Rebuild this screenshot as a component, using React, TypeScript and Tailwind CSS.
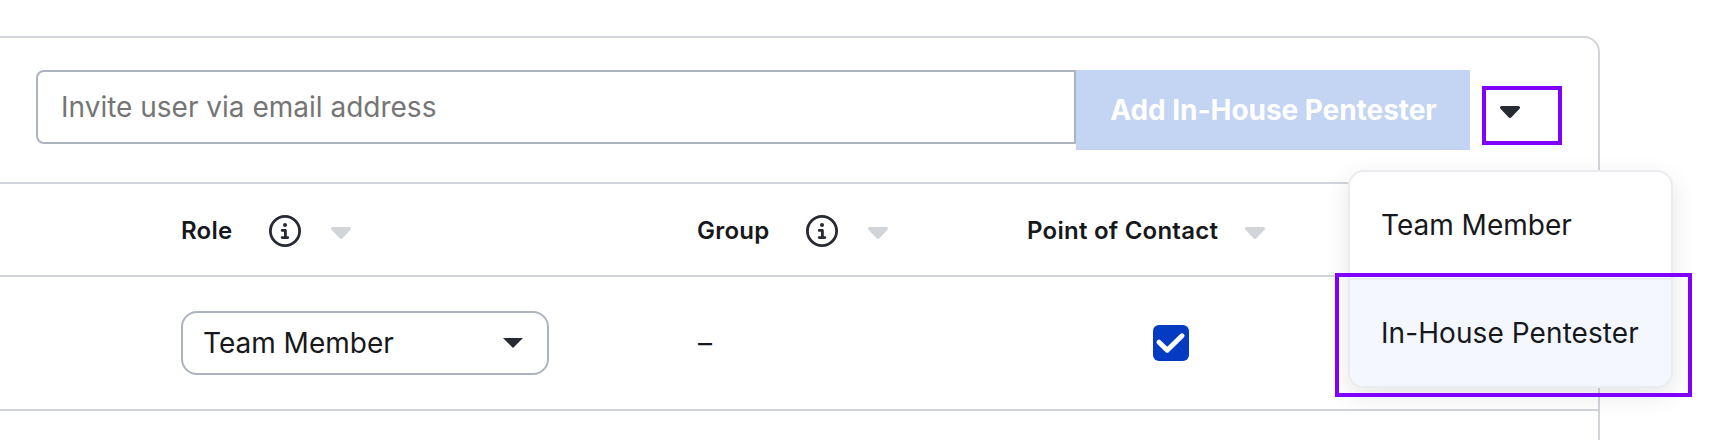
function Caret({ className }: { className: string }) {
  return (
    <svg viewBox="0 0 20 12" className={`h-3 w-5 shrink-0 ${className}`} fill="currentColor" aria-hidden="true">
      <path d="M1.6 0h16.8c1.5 0 2.1 1.7 1.1 2.8l-8 8.5c-.8.9-2.2.9-3 0l-8-8.5C-.5 1.7.1 0 1.6 0Z" />
    </svg>
  );
}

function InfoIcon({ className }: { className: string }) {
  return (
    <svg viewBox="0 0 32 32" className={`size-8 shrink-0 text-[#272a33] ${className}`} fill="none" stroke="currentColor" aria-hidden="true">
      <circle cx="16" cy="16" r="14.6" strokeWidth="2.8" />
      <circle cx="16" cy="9.9" r="2" fill="currentColor" stroke="none" />
      <path d="M13.2 15.4h3.2v7M13.2 22.6h5.6" strokeWidth="2.8" strokeLinecap="round" strokeLinejoin="round" />
    </svg>
  );
}

export default function App() {
  return (
    <div className="relative h-[440px] w-[1712px] overflow-hidden bg-white pt-9 font-['Inter',sans-serif] text-[28px] leading-[34px] text-[#17181c]">
      <section className="h-[420px] w-[1600px] rounded-tr-2xl border-t-2 border-r-2 border-[#d1d5da]">
        <div className="flex h-[146px] items-start border-b-2 border-[#d1d5da] pt-8 pl-9">
          <input
            type="text"
            placeholder="Invite user via email address"
            className="h-[74px] w-[1040px] rounded-l-lg border-2 border-[#adb3bf] bg-white pr-6 pl-[23px] placeholder:text-[#757575] focus:outline-none"
          />
          <button className="h-20 w-[394px] bg-[#c4d4f3] pl-px font-bold tracking-[-0.05px] whitespace-nowrap text-white">
            Add In-House Pentester
          </button>
          <button
            aria-label="Choose role"
            className="mt-4 ml-3 flex h-[59px] w-20 items-start border-4 border-[#7f00ff] pt-4 pl-3.5"
          >
            <Caret className="text-[#272a33]" />
          </button>
        </div>

        <div className="flex h-[93px] items-center border-b-2 border-[#d1d5da] pt-px text-2xl font-semibold tracking-[0.25px]">
          <div className="flex w-[517px] items-center pl-[181px] box-content">
            <span className="mt-0.5 w-[88px]">Role</span>
            <InfoIcon className="mt-0.5" />
            <Caret className="mt-1.5 ml-[30px] text-[#d1d5da]" />
          </div>
          <div className="flex w-[329px] items-center">
            <span className="mt-0.5 -ml-px w-[109px]">Group</span>
            <InfoIcon className="mt-0.5" />
            <Caret className="mt-1.5 ml-[30px] text-[#d1d5da]" />
          </div>
          <div className="flex items-center">
            <span className="mt-0.5 w-[218px] whitespace-nowrap">Point of Contact</span>
            <Caret className="mt-1.5 text-[#d1d5da]" />
          </div>
        </div>

        <div className="flex h-[134px] items-center border-b-2 border-[#d1d5da] pl-[181px]">
          <button className="flex h-16 w-[368px] items-center justify-between rounded-2xl border-2 border-[#adb3bf] bg-white pr-6 pl-5">
            <span>Team Member</span>
            <svg viewBox="0 0 20 10" className="h-2.5 w-5 text-[#272a33]" fill="currentColor" aria-hidden="true">
              <path d="M0 0h20L10 10Z" />
            </svg>
          </button>
          <span className="ml-[148px] w-[456px] pl-px">–</span>
          <span role="checkbox" aria-checked="true" className="size-9 rounded-md bg-[#043bc2]">
            <svg viewBox="0 0 36 36" className="size-9" fill="none" stroke="#fff" strokeWidth="5" strokeLinecap="round" strokeLinejoin="round" aria-hidden="true">
              <path d="M6 17.2l8.2 8L29 10.8" />
            </svg>
          </span>
        </div>
      </section>

      <div role="menu" className="absolute top-[170px] left-[1348px] flex h-[218px] w-[325px] flex-col overflow-hidden rounded-2xl border-2 border-[#ebebf0] bg-white shadow-[0_8px_24px_rgba(0,0,0,0.1)]">
        <div role="menuitem" className="flex h-[108px] items-center border-b-2 border-[#ebebf0] pl-[31px]">
          Team Member
        </div>
        <div role="menuitem" className="flex h-[106px] items-center bg-[#f4f7fe] pl-[31px] tracking-[0.08px]">
          In-House Pentester
        </div>
      </div>
      <div className="pointer-events-none absolute top-[273px] left-[1335px] h-[124px] w-[357px] border-4 border-[#7f00ff]" />
    </div>
  );
}
